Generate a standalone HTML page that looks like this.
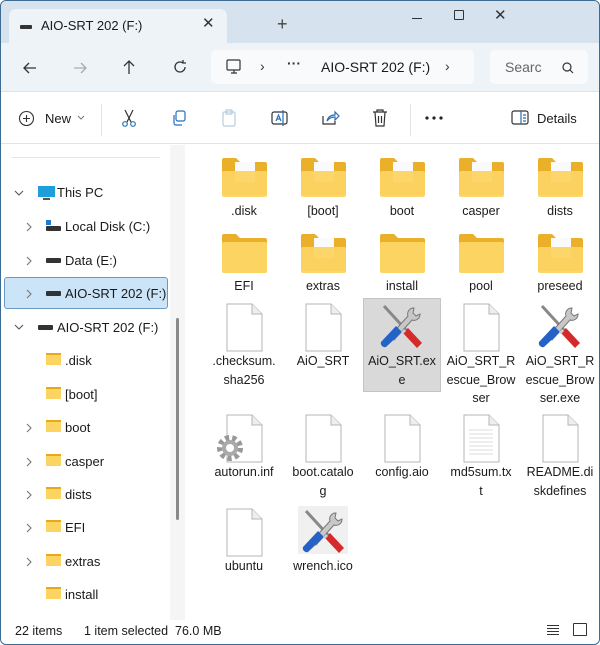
<!DOCTYPE html>
<html><head><meta charset="utf-8"><style>
*{margin:0;padding:0;box-sizing:border-box}
body{width:600px;height:645px;overflow:hidden;font-family:"Liberation Sans",sans-serif;color:#1a1a1a;background:#fff;position:relative}
.a{position:absolute;white-space:nowrap}
.t{font-size:13px}
.lbl{position:absolute;width:78px;text-align:center;font-size:12.5px;line-height:18.5px;color:#1a1a1a;white-space:nowrap}
.ic{position:absolute}
.sb{position:absolute;font-size:13px;line-height:16px}
.cv{position:absolute;width:10px;height:10px}
</style></head><body>
<svg width="0" height="0" style="position:absolute">
<defs>
<g id="fold"><path d="M1 3a2 2 0 0 1 2-2h12l4 4h25a2 2 0 0 1 2 2v31H1z" fill="#eab02a"/><rect x="1" y="9" width="45" height="31" rx="2" fill="#fcd462"/></g>
<g id="foldp"><path d="M1 3a2 2 0 0 1 2-2h12l4 4h25a2 2 0 0 1 2 2v31H1z" fill="#eab02a"/><rect x="14" y="5" width="20" height="20" fill="#fafafa"/><rect x="1" y="14" width="45" height="26" rx="2" fill="#fcd462" opacity=".95"/></g>
<g id="file"><path d="M1 1h25l10 10v37H1z" fill="#fff" stroke="#b5b5b5"/><path d="M26 1v10h10" fill="#eee" stroke="#b5b5b5"/></g>
<g id="wr"><path d="M6 4l22 24" stroke="#888" stroke-width="3"/><path d="M36 6a6 6 0 0 0-6 8L12 34l4 4 18-20a6 6 0 0 0 8-6l-4 2-3-3z" fill="#c8c8c8" stroke="#777"/><path d="M30 26l14 15-5 5-14-15z" fill="#d42a2a"/><path d="M18 24L3 40a4 4 0 0 0 5 5l16-15z" fill="#2462c8"/><path d="M27 28l-3 3" stroke="#ccc" stroke-width="3"/></g>
<path id="cr" d="M3 1l4 4-4 4" fill="none" stroke="#777" stroke-width="1.1"/>
<path id="cd" d="M1 3l4 4 4-4" fill="none" stroke="#555" stroke-width="1.1"/>
</defs></svg>
<!-- frame -->
<div class="a" style="left:0;top:0;width:600px;height:645px;border:1px solid #3c6b94;border-radius:6px"></div>
<!-- tab bar -->
<div class="a" style="left:1px;top:1px;width:598px;height:42px;background:#d6e3ee;border-radius:6px 6px 0 0"></div>
<div class="a" style="left:9px;top:9px;width:218px;height:34px;background:#eef3f8;border-radius:7px 7px 0 0"></div>
<div class="a" style="left:20px;top:25px;width:12px;height:4px;background:#333;border-radius:1px"></div>
<div class="a t" style="left:41px;top:18px;font-size:13px">AIO-SRT 202 (F:)</div>
<div class="a" style="left:202px;top:14px;font-size:15px;color:#333">✕</div>
<div class="a" style="left:277px;top:14px;font-size:18px;color:#444">+</div>
<div class="a" style="left:412px;top:18px;width:10px;height:1px;background:#333"></div>
<div class="a" style="left:454px;top:10px;width:10px;height:10px;border:1.3px solid #333;border-radius:1px"></div>
<div class="a" style="left:494px;top:6px;font-size:15px;color:#333">✕</div>
<!-- nav bar -->
<div class="a" style="left:1px;top:43px;width:598px;height:49px;background:#eef3f8;border-bottom:1px solid #dfe4ea"></div>
<svg class="a" style="left:20px;top:58px" width="20" height="20" viewBox="0 0 20 20" fill="none" stroke="#333" stroke-width="1.3"><path d="M16 10H4M9 5L4 10l5 5"/></svg>
<svg class="a" style="left:70px;top:58px" width="20" height="20" viewBox="0 0 20 20" fill="none" stroke="#aaa" stroke-width="1.3"><path d="M4 10h12M11 5l5 5-5 5"/></svg>
<svg class="a" style="left:119px;top:57px" width="20" height="20" viewBox="0 0 20 20" fill="none" stroke="#333" stroke-width="1.3"><path d="M10 17V4M5 9l5-5 5 5"/></svg>
<svg class="a" style="left:170px;top:57px" width="20" height="20" viewBox="0 0 20 20" fill="none" stroke="#333" stroke-width="1.3"><path d="M15 10a5 5 0 1 1-2-4M13 3v3h3"/></svg>
<div class="a" style="left:211px;top:50px;width:263px;height:34px;background:#f8fafc;border-radius:5px"></div>
<svg class="a" style="left:225px;top:58px" width="18" height="18" viewBox="0 0 18 18" fill="none" stroke="#333" stroke-width="1.2"><rect x="2" y="2" width="13" height="10" rx="1"/><path d="M6 15h6M9 12v3"/></svg>
<div class="a" style="left:260px;top:58px;font-size:14px;color:#333">›</div>
<div class="a" style="left:287px;top:55px;font-size:14px;font-weight:bold;color:#333">···</div>
<div class="a" style="left:321px;top:59px;font-size:14px">AIO-SRT 202 (F:)</div>
<div class="a" style="left:445px;top:58px;font-size:14px;color:#333">›</div>
<div class="a" style="left:490px;top:50px;width:98px;height:34px;background:#f8fafc;border-radius:5px"></div>
<div class="a" style="left:505px;top:59px;font-size:14px;color:#666">Searc</div>
<svg class="a" style="left:561px;top:61px" width="14" height="14" viewBox="0 0 14 14" fill="none" stroke="#333" stroke-width="1.2"><circle cx="6" cy="6" r="4"/><path d="M9 9l3 3"/></svg>
<!-- toolbar -->
<div class="a" style="left:1px;top:92px;width:598px;height:52px;background:#fff;border-bottom:1px solid #e3e3e3"></div>
<svg class="a" style="left:18px;top:110px" width="17" height="17" viewBox="0 0 17 17" fill="none" stroke="#333" stroke-width="1.1"><circle cx="8.5" cy="8.5" r="7"/><path d="M8.5 5v7M5 8.5h7"/></svg>
<div class="a t" style="left:45px;top:111px">New</div>
<svg class="a" style="left:77px;top:115px" width="8" height="6" viewBox="0 0 8 6"><path d="M1 1l3 3 3-3" fill="none" stroke="#777"/></svg>
<div class="a" style="left:101px;top:104px;width:1px;height:32px;background:#e3e3e3"></div>
<svg class="a" style="left:119px;top:108px" width="20" height="20" viewBox="0 0 20 20" fill="none" stroke="#2a6fb8" stroke-width="1.2"><path d="M6 2l6 12M14 2L8 14" stroke="#333"/><circle cx="6" cy="16" r="2.3"/><circle cx="14" cy="16" r="2.3"/></svg>
<svg class="a" style="left:170px;top:109px" width="18" height="18" viewBox="0 0 18 18" fill="none" stroke="#2a6fb8" stroke-width="1.2"><rect x="6" y="2" width="9" height="10" rx="2"/><path d="M4 6v8a2 2 0 0 0 2 2h6"/></svg>
<svg class="a" style="left:220px;top:108px" width="18" height="20" viewBox="0 0 18 20" fill="none" stroke="#b8cde0" stroke-width="1.2"><rect x="3" y="4" width="12" height="14" rx="1.5"/><rect x="6" y="2" width="6" height="4"/></svg>
<svg class="a" style="left:270px;top:108px" width="20" height="20" viewBox="0 0 20 20" fill="none" stroke="#2a6fb8" stroke-width="1.2"><rect x="2" y="4" width="15" height="12" rx="2" stroke="#333"/><path d="M6 13l2.5-6 2.5 6M7 11h3M13 2v16"/></svg>
<svg class="a" style="left:320px;top:108px" width="20" height="20" viewBox="0 0 20 20" fill="none" stroke="#2a6fb8" stroke-width="1.2"><path d="M3 8v8h12v-3" stroke="#333"/><path d="M7 13c1-4 4-6 8-6V4l4 4-4 4V9c-3 0-6 1-8 4z"/></svg>
<svg class="a" style="left:371px;top:108px" width="18" height="20" viewBox="0 0 18 20" fill="none" stroke="#333" stroke-width="1.2"><path d="M2 4h14M6 4V2h6v2M4 4l1 14h8l1-14M7.5 8v7M10.5 8v7"/></svg>
<div class="a" style="left:410px;top:104px;width:1px;height:32px;background:#e3e3e3"></div>
<svg class="a" style="left:424px;top:116px" width="20" height="4" viewBox="0 0 20 4" fill="#222"><circle cx="3" cy="2" r="1.6"/><circle cx="10" cy="2" r="1.6"/><circle cx="17" cy="2" r="1.6"/></svg>
<svg class="a" style="left:511px;top:110px" width="18" height="16" viewBox="0 0 18 16" fill="none" stroke="#2a6fb8" stroke-width="1.2"><rect x="1" y="1" width="16" height="13" rx="2" stroke="#333"/><path d="M10 1v13M12 5h3M12 8h3M12 11h3"/></svg>
<div class="a t" style="left:537px;top:111px">Details</div>
<!-- sidebar -->
<div class="a" style="left:12px;top:157px;width:148px;height:1px;background:#e5e5e5"></div>
<div class="a" style="left:170px;top:145px;width:15px;height:475px;background:#f5f5f5"></div>
<div class="a" style="left:176px;top:318px;width:3px;height:202px;background:#8a8a8a;border-radius:2px"></div>
<div class="a" style="left:4px;top:277px;width:164px;height:32px;background:#cce4f7;border:1px solid #6b9ac4;border-radius:3px"></div>
<svg class="cv" style="left:14px;top:188px"><use href="#cd"/></svg>
<svg class="a" style="left:37px;top:185px" width="19" height="16" viewBox="0 0 19 16"><rect x="1" y="1" width="17" height="11" fill="#1e9fd9"/><rect x="6" y="13" width="7" height="2" fill="#555"/></svg>
<div class="sb" style="left:57px;top:185px">This PC</div>
<svg class="cv" style="left:24px;top:222px"><use href="#cr"/></svg>
<div class="a" style="left:46px;top:220px;width:5px;height:5px;background:#1f7ad0"></div>
<div class="a" style="left:46px;top:226px;width:15px;height:5px;background:#333;border-radius:1px"></div>
<div class="sb" style="left:65px;top:219px">Local Disk (C:)</div>
<svg class="cv" style="left:24px;top:256px"><use href="#cr"/></svg>
<div class="a" style="left:46px;top:258px;width:15px;height:5px;background:#333;border-radius:1px"></div>
<div class="sb" style="left:65px;top:253px">Data (E:)</div>
<svg class="cv" style="left:24px;top:289px"><use href="#cr"/></svg>
<div class="a" style="left:46px;top:291px;width:15px;height:5px;background:#333;border-radius:1px"></div>
<div class="sb" style="left:65px;top:286px">AIO-SRT 202 (F:)</div>
<svg class="cv" style="left:14px;top:322px"><use href="#cd"/></svg>
<div class="a" style="left:38px;top:325px;width:15px;height:5px;background:#333;border-radius:1px"></div>
<div class="sb" style="left:57px;top:320px">AIO-SRT 202 (F:)</div>
<!-- sidebar folders -->
<div class="a" style="left:46px;top:353px;width:15px;height:12px;background:#fcd462;border-top:2px solid #e8a818"></div><div class="sb" style="left:65px;top:353px">.disk</div>
<div class="a" style="left:46px;top:387px;width:15px;height:12px;background:#fcd462;border-top:2px solid #e8a818"></div><div class="sb" style="left:65px;top:387px">[boot]</div>
<svg class="cv" style="left:24px;top:423px"><use href="#cr"/></svg><div class="a" style="left:46px;top:420px;width:15px;height:12px;background:#fcd462;border-top:2px solid #e8a818"></div><div class="sb" style="left:65px;top:420px">boot</div>
<svg class="cv" style="left:24px;top:457px"><use href="#cr"/></svg><div class="a" style="left:46px;top:454px;width:15px;height:12px;background:#fcd462;border-top:2px solid #e8a818"></div><div class="sb" style="left:65px;top:454px">casper</div>
<svg class="cv" style="left:24px;top:490px"><use href="#cr"/></svg><div class="a" style="left:46px;top:487px;width:15px;height:12px;background:#fcd462;border-top:2px solid #e8a818"></div><div class="sb" style="left:65px;top:487px">dists</div>
<svg class="cv" style="left:24px;top:523px"><use href="#cr"/></svg><div class="a" style="left:46px;top:520px;width:15px;height:12px;background:#fcd462;border-top:2px solid #e8a818"></div><div class="sb" style="left:65px;top:520px">EFI</div>
<svg class="cv" style="left:24px;top:557px"><use href="#cr"/></svg><div class="a" style="left:46px;top:554px;width:15px;height:12px;background:#fcd462;border-top:2px solid #e8a818"></div><div class="sb" style="left:65px;top:554px">extras</div>
<div class="a" style="left:46px;top:587px;width:15px;height:12px;background:#fcd462;border-top:2px solid #e8a818"></div><div class="sb" style="left:65px;top:587px">install</div>

<!-- selection -->
<div class="a" style="left:363px;top:298px;width:78px;height:94px;background:#d9d9d9;border:1px solid #c4c4c4"></div>

<!-- row1 -->
<svg class="ic" style="left:221px;top:157px" width="47" height="42"><use href="#foldp"/></svg>
<svg class="ic" style="left:300px;top:157px" width="47" height="42"><use href="#foldp"/></svg>
<svg class="ic" style="left:379px;top:157px" width="47" height="42"><use href="#foldp"/></svg>
<svg class="ic" style="left:458px;top:157px" width="47" height="42"><use href="#foldp"/></svg>
<svg class="ic" style="left:537px;top:157px" width="47" height="42"><use href="#foldp"/></svg>
<div class="lbl" style="left:205px;top:202px">.disk</div>
<div class="lbl" style="left:284px;top:202px">[boot]</div>
<div class="lbl" style="left:363px;top:202px">boot</div>
<div class="lbl" style="left:442px;top:202px">casper</div>
<div class="lbl" style="left:521px;top:202px">dists</div>
<!-- row2 -->
<svg class="ic" style="left:221px;top:233px" width="47" height="42"><use href="#fold"/></svg>
<svg class="ic" style="left:300px;top:233px" width="47" height="42"><use href="#foldp"/></svg>
<svg class="ic" style="left:379px;top:233px" width="47" height="42"><use href="#fold"/></svg>
<svg class="ic" style="left:458px;top:233px" width="47" height="42"><use href="#fold"/></svg>
<svg class="ic" style="left:537px;top:233px" width="47" height="42"><use href="#foldp"/></svg>
<div class="lbl" style="left:205px;top:277px">EFI</div>
<div class="lbl" style="left:284px;top:277px">extras</div>
<div class="lbl" style="left:363px;top:277px">install</div>
<div class="lbl" style="left:442px;top:277px">pool</div>
<div class="lbl" style="left:521px;top:277px">preseed</div>
<!-- row3 -->
<svg class="ic" style="left:226px;top:303px" width="38" height="50"><use href="#file"/></svg>
<svg class="ic" style="left:305px;top:303px" width="38" height="50"><use href="#file"/></svg>
<svg class="ic" style="left:378px;top:302px" width="48" height="48"><use href="#wr"/></svg>
<svg class="ic" style="left:463px;top:303px" width="38" height="50"><use href="#file"/></svg>
<svg class="ic" style="left:536px;top:302px" width="48" height="48"><use href="#wr"/></svg>
<div class="lbl" style="left:205px;top:352px">.checksum.<br>sha256</div>
<div class="lbl" style="left:284px;top:352px">AiO_SRT</div>
<div class="lbl" style="left:363px;top:352px">AiO_SRT.ex<br>e</div>
<div class="lbl" style="left:442px;top:352px">AiO_SRT_R<br>escue_Brow<br>ser</div>
<div class="lbl" style="left:521px;top:352px">AiO_SRT_R<br>escue_Brow<br>ser.exe</div>
<!-- row4 -->
<svg class="ic" style="left:226px;top:414px" width="38" height="50"><use href="#file"/></svg>
<svg class="ic" style="left:215px;top:433px" width="30" height="30" viewBox="0 0 30 30"><circle cx="15" cy="15" r="10" fill="none" stroke="#999" stroke-width="6" stroke-dasharray="4 3"/><circle cx="15" cy="15" r="8" fill="#aaa"/><circle cx="15" cy="15" r="4" fill="#fff"/></svg>
<svg class="ic" style="left:305px;top:414px" width="38" height="50"><use href="#file"/></svg>
<svg class="ic" style="left:384px;top:414px" width="38" height="50"><use href="#file"/></svg>
<svg class="ic" style="left:463px;top:414px" width="38" height="50"><use href="#file"/><path d="M6 16h24M6 20h24M6 24h24M6 28h24M6 32h24M6 36h24M6 40h24" stroke="#ddd"/></svg>
<svg class="ic" style="left:542px;top:414px" width="38" height="50"><use href="#file"/></svg>
<div class="lbl" style="left:205px;top:463px">autorun.inf</div>
<div class="lbl" style="left:284px;top:463px">boot.catalo<br>g</div>
<div class="lbl" style="left:363px;top:463px">config.aio</div>
<div class="lbl" style="left:442px;top:463px">md5sum.tx<br>t</div>
<div class="lbl" style="left:521px;top:463px">README.di<br>skdefines</div>
<!-- row5 -->
<svg class="ic" style="left:226px;top:508px" width="38" height="50"><use href="#file"/></svg>
<div class="a" style="left:298px;top:506px;width:50px;height:48px;background:#f0f0f0"></div>
<svg class="ic" style="left:300px;top:507px" width="48" height="48"><use href="#wr"/></svg>
<div class="lbl" style="left:205px;top:557px">ubuntu</div>
<div class="lbl" style="left:284px;top:557px">wrench.ico</div>
<!-- status -->
<div class="a" style="left:15px;top:624px;font-size:12.5px">22 items</div>
<div class="a" style="left:84px;top:624px;font-size:12.5px">1 item selected&nbsp; 76.0 MB</div>
<svg class="a" style="left:546px;top:624px" width="14" height="12" viewBox="0 0 14 12" stroke="#333" stroke-width="1"><path d="M1 1.5h12M1 4.5h12M1 7.5h12M1 10.5h12"/></svg>
<div class="a" style="left:573px;top:623px;width:14px;height:13px;border:1.2px solid #333;border-radius:1px"></div>
</body></html>
